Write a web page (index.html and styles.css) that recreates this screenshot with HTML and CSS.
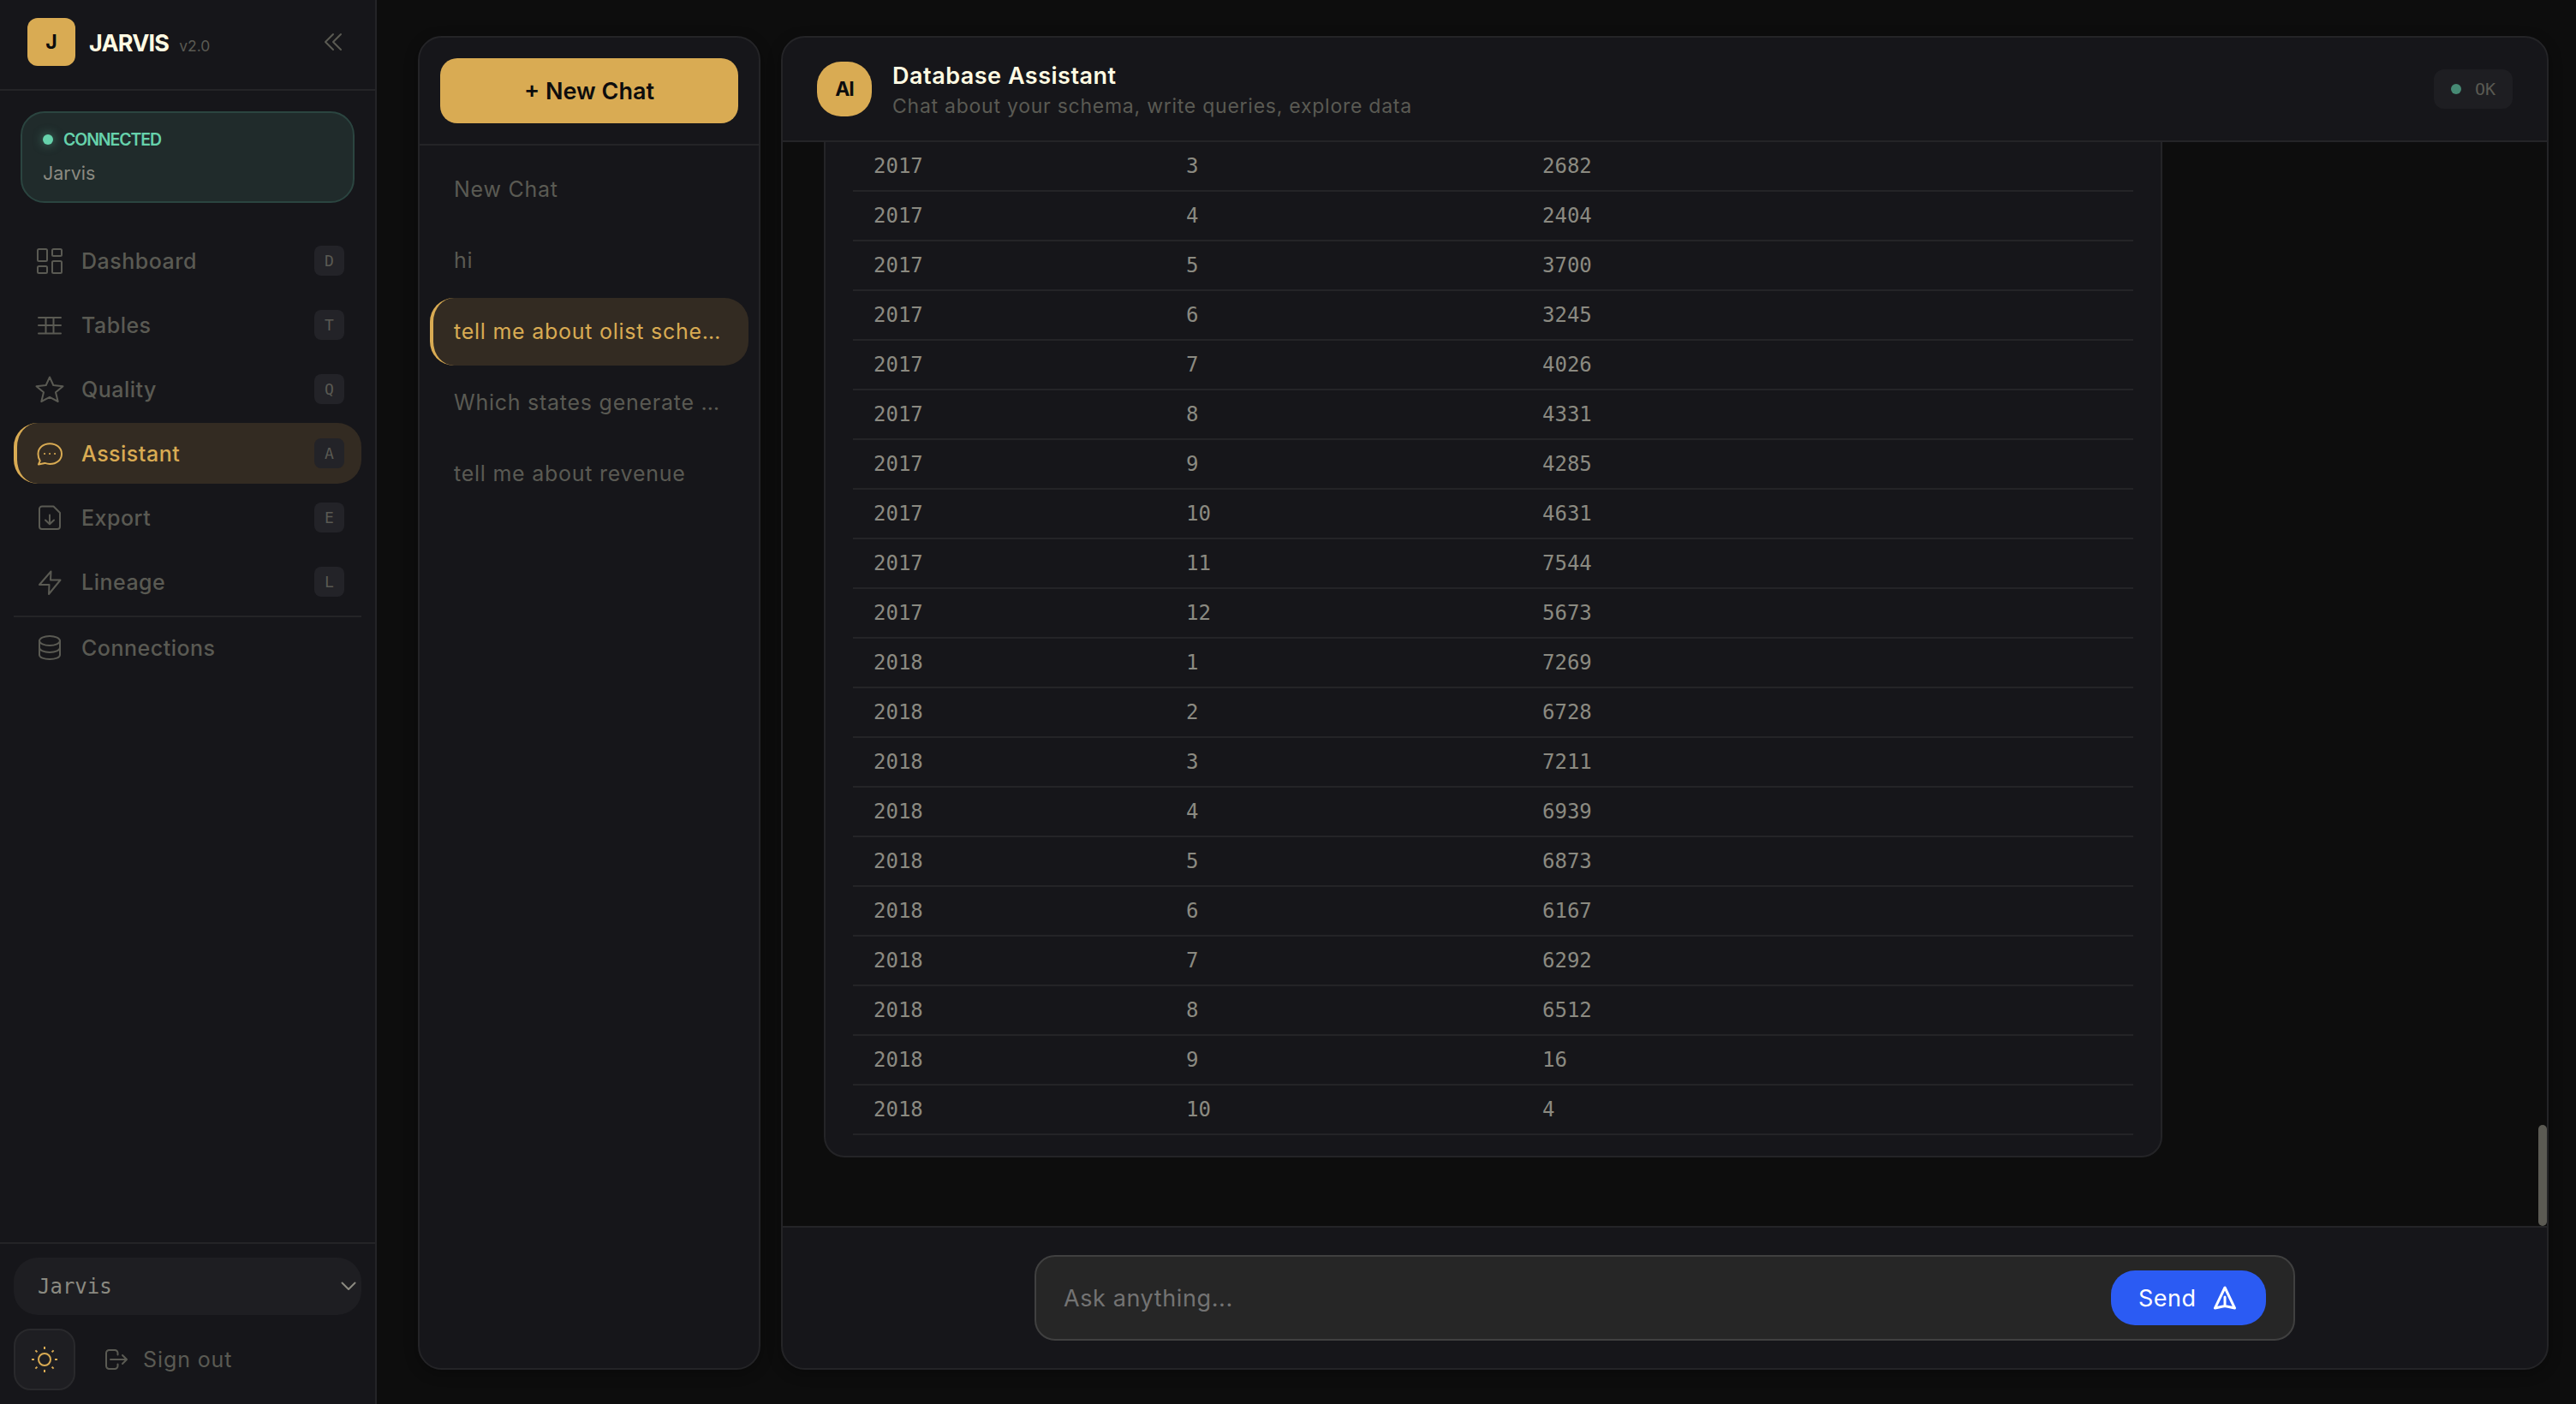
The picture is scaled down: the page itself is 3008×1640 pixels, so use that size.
FILE: index.html
```
<!DOCTYPE html>
<html lang="en">
<head>
    <meta charset="UTF-8">
    <meta name="viewport" content="width=device-width, initial-scale=1.0">
    <title>Jarvis - Database Assistant</title>
    <link rel="stylesheet" href="styles.css">
</head>
<body>
    <aside class="sidebar">
        <header class="brand">
            <div class="logo">J</div>
            <span class="brand-name">JARVIS</span>
            <span class="version">v2.0</span>
            <svg class="collapse" viewBox="0 0 22 22"><path d="M11 2L2 11l9 9M20 2l-9 9 9 9"/></svg>
        </header>

        <div class="status-card">
            <div class="status-line"><i class="dot"></i><span>CONNECTED</span></div>
            <div class="status-db">Jarvis</div>
        </div>

        <nav class="nav">
            <a class="nav-item">
                <svg viewBox="0 0 36 36"><rect x="4" y="4" width="11" height="14" rx="1.5"/><rect x="21" y="4" width="11" height="8" rx="1.5"/><rect x="4" y="24" width="11" height="8" rx="1.5"/><rect x="21" y="18" width="11" height="14" rx="1.5"/></svg>
                <span>Dashboard</span><kbd>D</kbd>
            </a>
            <a class="nav-item">
                <svg viewBox="0 0 36 36"><path d="M5 9h26M5 18h26M5 27.5h26M13.5 9v18M22.5 9v18"/></svg>
                <span>Tables</span><kbd>T</kbd>
            </a>
            <a class="nav-item">
                <svg viewBox="0 0 36 36"><path d="M18 3.5l4.3 9.5L33.5 14.2 25 21.3 27.7 32 18 26.8 8.3 32 11 21.3 2.5 14.2 13.7 13z"/></svg>
                <span>Quality</span><kbd>Q</kbd>
            </a>
            <a class="nav-item active">
                <svg viewBox="0 0 36 36"><path d="M5 30.5l1.800-4.300C5.300 24 4.500 21.200 4.500 18.200c0-7 6-12 13.700-12S32 11.200 32 18.200 26 30 18.200 30c-2.200 0-4.200-.5-5.900-1.100z"/><path d="M12 18h.1M18 18h.1M24 18h.1"/></svg>
                <span>Assistant</span><kbd>A</kbd>
            </a>
            <a class="nav-item">
                <svg viewBox="0 0 36 36"><path d="M9 4.500h13.500L30 12v16a3 3 0 0 1-3 3H9a3 3 0 0 1-3-3V7.500a3 3 0 0 1 3-3zM18 14.500v10.500M13 20.500l5 4.800 5-4.800"/></svg>
                <span>Export</span><kbd>E</kbd>
            </a>
            <a class="nav-item">
                <svg viewBox="0 0 36 36"><path d="M19.500 5.500L6 21h11.500L17 32l13.500-16.500H19z"/></svg>
                <span>Lineage</span><kbd>L</kbd>
            </a>
            <hr>
            <a class="nav-item">
                <svg viewBox="0 0 36 36"><ellipse cx="18" cy="9.500" rx="12" ry="5.500"/><path d="M6 9.500v16.500c0 3 5.400 5 12 5s12-2 12-5V9.500M6 17.500c0 3.200 5.400 5.500 12 5.500s12-2.300 12-5.500"/></svg>
                <span>Connections</span>
            </a>
        </nav>

        <footer class="side-footer">
            <div class="db-select">
                <span>Jarvis</span>
                <svg viewBox="0 0 18 11"><path d="M1.500 1.500L9 9l7.500-7.500"/></svg>
            </div>
            <div class="footer-row">
                <button class="theme-btn">
                    <svg viewBox="0 0 32 32"><circle cx="16" cy="16" r="7"/><path d="M16 1v3M16 28v3M1 16h3M28 16h3M5.400 5.400l2 2M24.600 24.600l2 2M5.400 26.600l2-2M24.600 7.400l2-2"/></svg>
                </button>
                <a class="sign-out">
                    <svg viewBox="0 0 28 28"><path d="M15.500 8.500v-2A3.500 3.500 0 0 0 12 3H5.500A3.500 3.500 0 0 0 2 6.500v15A3.500 3.500 0 0 0 5.500 25H12a3.500 3.500 0 0 0 3.500-3.500v-2M7 14h19M21 9l5 5-5 5"/></svg>
                    <span>Sign out</span>
                </a>
            </div>
        </footer>
    </aside>

    <main>
        <section class="panel chats">
            <div class="chats-top">
                <button class="new-chat">+ New Chat</button>
            </div>
            <ul class="chat-list">
                <li>New Chat</li>
                <li>hi</li>
                <li class="active">tell me about olist sche…</li>
                <li>Which states generate …</li>
                <li>tell me about revenue</li>
            </ul>
        </section>

        <section class="panel chat">
            <header class="chat-header">
                <div class="avatar">AI</div>
                <div>
                    <h1>Database Assistant</h1>
                    <p class="subtitle">Chat about your schema, write queries, explore data</p>
                </div>
                <div class="ok-badge"><i class="dot"></i><span>OK</span></div>
            </header>

            <div class="messages">
                <div class="bubble">
                    <table>
                        <colgroup><col class="col-year"><col class="col-month"><col></colgroup>
                        <tbody id="rows"></tbody>
                    </table>
                </div>
                <div class="scroll-thumb"></div>
            </div>

            <div class="composer">
                <div class="input-box">
                    <span class="placeholder">Ask anything...</span>
                    <button class="send">
                        <span>Send</span>
                        <svg viewBox="0 0 28 28"><path d="M14 2L2.500 26 14 23.500 25.500 26zM14 13v10"/></svg>
                    </button>
                </div>
            </div>
        </section>
    </main>

    <script>
        const orders = [
            [2017, 3, 2682], [2017, 4, 2404], [2017, 5, 3700], [2017, 6, 3245],
            [2017, 7, 4026], [2017, 8, 4331], [2017, 9, 4285], [2017, 10, 4631],
            [2017, 11, 7544], [2017, 12, 5673], [2018, 1, 7269], [2018, 2, 6728],
            [2018, 3, 7211], [2018, 4, 6939], [2018, 5, 6873], [2018, 6, 6167],
            [2018, 7, 6292], [2018, 8, 6512], [2018, 9, 16], [2018, 10, 4]
        ];

        document.getElementById('rows').innerHTML = orders
            .map(row => `<tr>${row.map(cell => `<td>${cell}</td>`).join('')}</tr>`)
            .join('');
    </script>
</body>
</html>
```

FILE: styles.css
```
:root {
    --bg: #0d0d0d;
    --panel: #16161a;
    --line: #242427;
    --gold: #d9ab53;
    --gold-soft: #332b22;
    --cream: #fffbe3;
    --text: #8b8a81;
    --muted: #5a5a53;
    --raised: #1e1e22;
    --green: #66d2ab;
    --sans: "Inter", "Noto Sans", sans-serif;
    --mono: "DejaVu Sans Mono", "Liberation Mono", monospace;
}
* {
    box-sizing: border-box;
}
body {
    margin: 0;
    height: 1640px;
    display: flex;
    overflow: hidden;
    background: var(--bg);
    color: var(--muted);
    font-family: var(--sans);
    font-size: 25px;
}
svg {
    flex: none;
    fill: none;
    stroke: currentColor;
    stroke-width: 2;
    stroke-linecap: round;
    stroke-linejoin: round;
}
button {
    border: none;
    font-family: inherit;
}
.dot {
    flex: none;
    width: 12px;
    height: 12px;
    border-radius: 50%;
    background: var(--green);
}

/* sidebar */
.sidebar {
    width: 440px;
    flex: none;
    display: flex;
    flex-direction: column;
    background: var(--panel);
    border-right: 2px solid var(--line);
}
.brand {
    height: 106px;
    display: flex;
    align-items: center;
    padding: 0 38px 6px 32px;
    border-bottom: 2px solid var(--line);
}
.logo {
    width: 56px;
    height: 56px;
    display: flex;
    align-items: center;
    justify-content: center;
    border-radius: 12px;
    background: var(--gold);
    color: #0d0d0d;
    font-size: 23px;
    font-weight: 700;
}
.brand-name {
    margin: 3px 0 0 16px;
    color: var(--cream);
    font-size: 27px;
    font-weight: 700;
    letter-spacing: -0.8px;
}
.version {
    margin: 9px 0 0 12px;
    font-size: 17.5px;
}
.collapse {
    width: 22px;
    height: 22px;
    margin-left: auto;
}
.status-card {
    height: 107px;
    margin: 24px 24px 0;
    padding: 18px 24px;
    border: 2px solid #2b4540;
    border-radius: 28px;
    background: #202b2b;
}
.status-line {
    display: flex;
    align-items: center;
    gap: 12px;
    height: 26px;
    color: var(--green);
    font-size: 19.5px;
    font-weight: 600;
    letter-spacing: -1.1px;
}
.status-card .dot {
    box-shadow: 0 0 12px rgba(102, 210, 171, 0.5);
}
.status-db {
    margin-top: 12px;
    line-height: 28px;
    color: var(--text);
    font-size: 21.5px;
}
.nav {
    display: flex;
    flex-direction: column;
    gap: 4px;
    padding: 32px 16px 0;
}
.nav-item {
    height: 71px;
    display: flex;
    align-items: center;
    padding: 0 20px 0 24px;
    border-radius: 28px;
    font-weight: 500;
    letter-spacing: 0.5px;
}
.nav-item svg {
    width: 36px;
    height: 36px;
    margin-right: 19px;
}
.nav-item.active {
    padding-left: 20px;
    border-left: 4px solid var(--gold);
    background: var(--gold-soft);
    color: var(--gold);
}
.nav hr {
    width: 100%;
    height: 2px;
    margin: 0 0 -4px;
    border: none;
    background: var(--line);
}
kbd {
    width: 35px;
    height: 35px;
    margin-left: auto;
    border-radius: 8px;
    background: #232328;
    color: var(--muted);
    font: 18px/35px var(--mono);
    letter-spacing: 0;
    text-align: center;
}
.side-footer {
    margin-top: auto;
    padding: 16px;
    border-top: 2px solid var(--line);
}
.db-select {
    height: 67px;
    display: flex;
    align-items: center;
    justify-content: space-between;
    padding: 0 6px 0 28px;
    border-radius: 28px;
    background: var(--raised);
    color: var(--text);
    font-family: var(--mono);
    font-size: 24px;
}
.db-select svg {
    width: 18px;
    height: 11px;
}
.footer-row {
    display: flex;
    align-items: center;
    margin-top: 16px;
}
.theme-btn {
    width: 72px;
    height: 72px;
    padding: 0;
    border: 2px solid #29292c;
    border-radius: 20px;
    background: var(--raised);
    color: var(--gold);
}
.theme-btn svg {
    display: block;
    width: 32px;
    height: 32px;
    margin: auto;
    stroke-linecap: butt;
}
.sign-out {
    display: flex;
    align-items: center;
    gap: 17px;
    margin-left: 34px;
    letter-spacing: 0.9px;
}
.sign-out svg {
    width: 28px;
    height: 28px;
}

/* chat history */
main {
    flex: 1;
    display: flex;
    gap: 24px;
    padding: 42px 32px 40px 48px;
}
.panel {
    display: flex;
    flex-direction: column;
    overflow: hidden;
    border: 2px solid var(--line);
    border-radius: 28px;
    background: var(--panel);
    box-shadow: 0 4px 16px rgba(0, 0, 0, 0.3);
}
.chats {
    width: 400px;
    flex: none;
}
.chats-top {
    padding: 24px;
    border-bottom: 2px solid var(--line);
}
.new-chat {
    display: block;
    width: 100%;
    height: 76px;
    border-radius: 20px;
    background: var(--gold);
    color: #0d0d0d;
    font-size: 27px;
    font-weight: 600;
}
.chat-list {
    display: flex;
    flex-direction: column;
    gap: 4px;
    margin: 0;
    padding: 12px;
    list-style: none;
}
.chat-list li {
    height: 79px;
    padding: 0 24px 0 28px;
    border-radius: 28px;
    line-height: 79px;
    letter-spacing: 0.75px;
    white-space: nowrap;
}
.chat-list .active {
    padding-left: 24px;
    border-left: 4px solid var(--gold);
    background: var(--gold-soft);
    color: var(--gold);
}

/* conversation */
.chat {
    flex: 1;
}
.chat-header {
    height: 122px;
    flex: none;
    display: flex;
    align-items: center;
    padding: 0 40px;
    border-bottom: 2px solid var(--line);
}
.avatar {
    width: 64px;
    height: 64px;
    display: flex;
    align-items: center;
    justify-content: center;
    margin-right: 24px;
    border-radius: 28px;
    background: var(--gold);
    color: #0d0d0d;
    font-size: 23px;
    font-weight: 700;
    letter-spacing: -1px;
}
h1 {
    margin: 4px 0 0;
    color: var(--cream);
    font-size: 27px;
    font-weight: 600;
    line-height: 36px;
    letter-spacing: 0.5px;
}
.subtitle {
    margin: 0;
    font-size: 23px;
    line-height: 34px;
    letter-spacing: 0.75px;
}
.ok-badge {
    width: 92px;
    height: 46px;
    display: flex;
    align-items: center;
    gap: 16px;
    margin-left: auto;
    padding-left: 20px;
    border-radius: 12px;
    background: var(--raised);
    font-family: var(--mono);
    font-size: 20px;
}
.ok-badge .dot {
    background: #468a74;
}
.messages {
    position: relative;
    flex: 1;
    min-height: 0;
    display: flex;
    flex-direction: column;
    justify-content: flex-end;
    padding: 0 0 80px 48px;
    background: var(--bg);
}
.bubble {
    width: 1563px;
    padding: 0 32px 24px;
    border: 2px solid var(--line);
    border-top: none;
    border-radius: 0 0 24px 24px;
    background: var(--panel);
}
table {
    width: 100%;
    border-collapse: separate;
    border-spacing: 0;
    table-layout: fixed;
    color: var(--text);
    font: 24px/56px var(--mono);
}
.col-year {
    width: 365px;
}
.col-month {
    width: 416px;
}
td {
    height: 58px;
    padding: 0 24px;
    border-bottom: 2px solid var(--line);
}
.scroll-thumb {
    position: absolute;
    right: 0;
    bottom: 0;
    width: 10px;
    height: 118px;
    border-radius: 5px;
    background: #5b5a53;
}
.composer {
    height: 166px;
    flex: none;
    padding-top: 32px;
    border-top: 2px solid var(--line);
}
.input-box {
    width: 1472px;
    height: 100px;
    display: flex;
    align-items: center;
    justify-content: space-between;
    margin: 0 auto;
    padding: 0 32px;
    border: 2px solid #404040;
    border-radius: 24px;
    background: #262626;
}
.placeholder {
    color: #737373;
    font-size: 27px;
    letter-spacing: 0.6px;
}
.send {
    width: 181px;
    height: 64px;
    display: flex;
    align-items: center;
    justify-content: space-between;
    padding: 0 34px 0 32px;
    border-radius: 28px;
    background: #2b5bf3;
    color: #fff;
    font-size: 27px;
    letter-spacing: 0.5px;
}
.send svg {
    width: 28px;
    height: 28px;
    stroke-width: 3;
}
```
